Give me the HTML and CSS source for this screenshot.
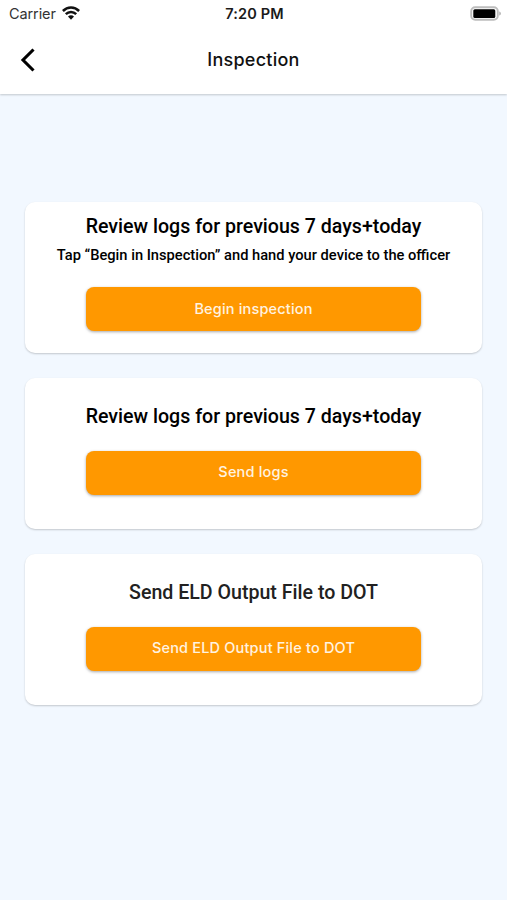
FILE: index.html
```html
<!DOCTYPE html>
<html lang="en">
<head>
<meta charset="utf-8">
<title>Inspection</title>
<link rel="stylesheet" href="styles.css">
</head>
<body>
<header class="top">
  <div class="status">
    <div class="carrier"><span>Carrier</span>
      <svg class="wifi" viewBox="0 0 18 14" width="18" height="14"><g fill="none" stroke="#111" stroke-width="2.5"><path d="M.9 5C5.500.4 12.500.4 17.100 5"/><path d="M3.800 8.200c3-2.900 7.400-2.900 10.400 0"/></g><path d="M6 10.600c1.800-1.700 4.200-1.700 6 0l-3 3.200z" fill="#111"/></svg>
    </div>
    <div class="time">7:20 PM</div>
    <svg class="battery" viewBox="0 0 31 15" width="31" height="15"><rect x="1.200" y="1.200" width="26.600" height="12.600" rx="4" fill="none" stroke="#bdbdbd" stroke-width="1.900"/><rect x="3.300" y="3.200" width="22" height="8.800" rx="1.500"/><path d="M29.300 5.400c2 .7 2 3.500 0 4.200z" fill="#aaa"/></svg>
  </div>
  <nav class="bar">
    <svg class="back" viewBox="0 0 16 24" width="16" height="24"><path d="M13.500 1.500 3 12l10.500 10.500" fill="none" stroke="#000" stroke-width="3.100"/></svg>
    <h1 class="title">Inspection</h1>
  </nav>
</header>
<main class="cards">
  <section class="card card-first">
    <h2 class="heading">Review logs for previous 7 days+today</h2>
    <p class="note">Tap “Begin in Inspection” and hand your device to the officer</p>
    <button class="btn">Begin inspection</button>
  </section>
  <section class="card">
    <h2 class="heading">Review logs for previous 7 days+today</h2>
    <button class="btn">Send logs</button>
  </section>
  <section class="card">
    <h2 class="heading soft">Send ELD Output File to DOT</h2>
    <button class="btn">Send ELD Output File to DOT</button>
  </section>
</main>
</body>
</html>
```
FILE: styles.css
```css
* { box-sizing: border-box; }
body { margin: 0; height: 900px; background: #f2f8ff; font-family: Roboto, sans-serif; color: #000; overflow: hidden; }
.top { height: 94px; background: #fff; box-shadow: 0 1px 2px rgba(0,0,0,.2); }
.status { height: 27px; display: grid; grid-template-columns: 1fr auto 1fr; align-items: center; padding: 0 6px 0 9px; font-family: Inter, sans-serif; font-size: 14.5px; }
.carrier { display: flex; align-items: center; gap: 6px; color: #333; letter-spacing: -.1px; }
.wifi { margin-top: -1px; }
.time { font-weight: 600; font-size: 14.5px; letter-spacing: .15px; margin-left: -1px; color: #1a1a1a; }
.battery { justify-self: end; margin-top: -1px; }
.bar { height: 65px; display: grid; grid-template-columns: 1fr auto 1fr; align-items: center; padding: 0 20px; }
.title { margin: 0; font: 500 18px Inter, sans-serif; letter-spacing: .25px; color: #111; }
.cards { display: flex; flex-direction: column; gap: 25px; padding: 108px 25px 0; }
.card { height: 151px; background: #fff; border-radius: 10px; box-shadow: 0 1px 2px rgba(0,0,0,.2); display: flex; flex-direction: column; align-items: center; padding-top: 26.5px; }
.card-first { padding-top: 13px; }
.heading { margin: 0; font-size: 19.6px; font-weight: 500; line-height: 24px; white-space: nowrap; }
.soft { color: #212121; }
.note { margin: 6px 0 0; font-size: 14.68px; font-weight: 500; line-height: 20px; white-space: nowrap; }
.btn { margin: 22px 0 0; width: 335px; height: 44px; flex: none; border: 0; border-radius: 8px; padding: 0 0 2px; background: #ff9800; color: #fff3e0; font: 500 14.5px Inter, sans-serif; letter-spacing: .18px; box-shadow: 0 1px 3px rgba(0,0,0,.35); }
```
